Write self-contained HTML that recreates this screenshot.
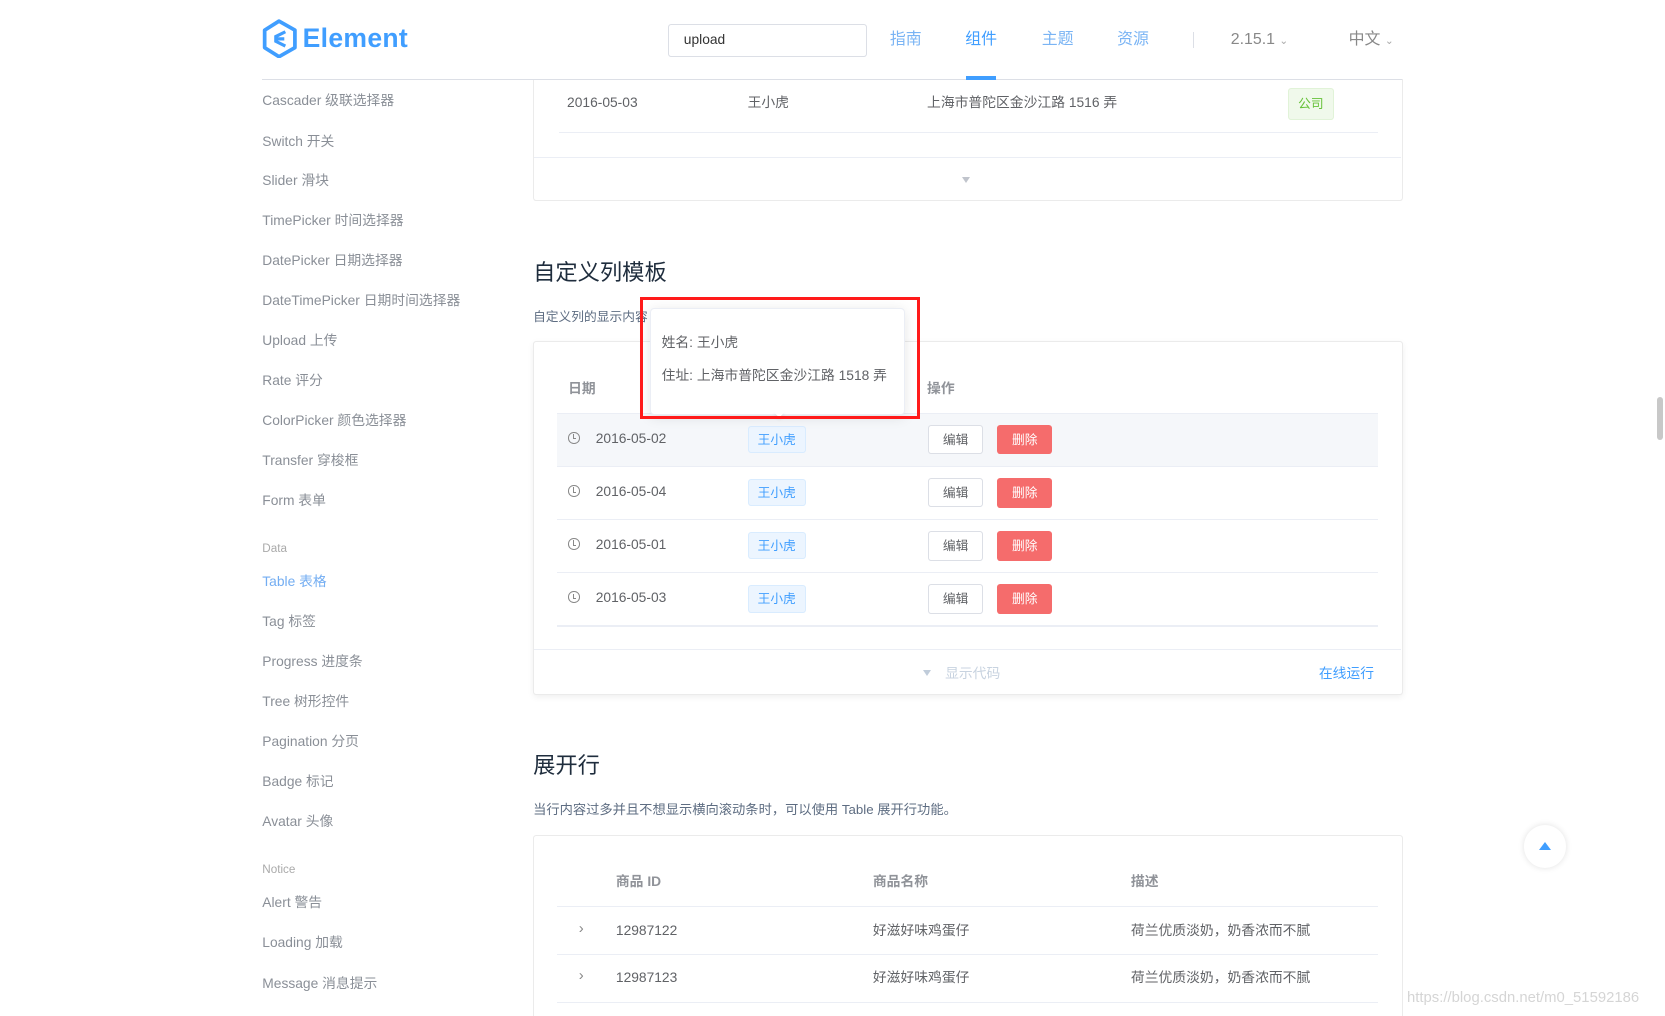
<!DOCTYPE html>
<html><head><meta charset="utf-8">
<style>
html,body{margin:0;padding:0;background:#fff;overflow:hidden}
body{width:1665px;height:1016px}
#w{zoom:1.0619;position:relative;width:1568px;height:957px;font-family:"Liberation Sans","Noto Sans CJK SC",sans-serif;color:#606266}
.a{position:absolute;white-space:nowrap;line-height:18px}
.side{font-size:13px;color:#8a8f97}
.grp{font-size:11px;color:#aaa}
.nav{font-size:15px;color:#7ab4f4}
.line{position:absolute;height:1px;background:#ebeef5}
.box{position:absolute;border:1px solid #ebebeb;border-radius:3px;background:#fff}
.t{font-size:13px;color:#606266}
.h{font-size:13px;color:#909399;font-weight:bold}
.tag{position:absolute;height:24px;line-height:24px;border:1px solid #d9ecff;background:#ecf5ff;color:#409eff;font-size:12px;border-radius:3px;text-align:center}
.btn1{position:absolute;width:50px;height:26px;line-height:26px;border:1px solid #dcdfe6;border-radius:3px;font-size:12px;text-align:center;color:#606266;background:#fff}
.btn2{position:absolute;width:52px;height:28px;line-height:28px;background:#f56c6c;border-radius:3px;font-size:12px;text-align:center;color:#fff}
.clk{position:absolute;width:9px;height:9px;border:1.3px solid #888;border-radius:50%}
.clk:after{content:"";position:absolute;left:4px;top:1px;width:2px;height:4px;border-left:1px solid #888;border-bottom:1px solid #888}
</style></head><body><div id="w">
<!-- logo -->
<svg class="a" style="left:247px;top:18px" width="34" height="37" viewBox="0 0 34 37"><path d="M16 2 L31 10.5 L31 27 L16 35.5 L2.5 27 L2.5 10.5 Z" fill="none" stroke="#409eff" stroke-width="3.5" stroke-linejoin="round"/><path d="M22 12 L13 16.5 L13 21 L22 25.5 M14 18.7 L21 18.7" fill="none" stroke="#409eff" stroke-width="3"/></svg>
<div class="a" style="left:285px;top:22px;font-size:25px;line-height:30px;font-weight:bold;color:#409eff;letter-spacing:.3px">Element</div>
<div class="a" style="left:629px;top:23px;width:186px;height:29px;border:1px solid #dcdfe6;border-radius:3px;font-size:13px;line-height:29px;color:#333;box-sizing:content-box"><span style="padding-left:14px">upload</span></div>
<div class="a nav" style="left:838px;top:28px">指南</div>
<div class="a nav" style="left:909px;top:28px;color:#409eff">组件</div>
<div class="a nav" style="left:981px;top:28px">主题</div>
<div class="a nav" style="left:1052px;top:28px">资源</div>
<div class="a" style="left:1123px;top:30px;width:1px;height:15px;background:#dcdfe6"></div>
<div class="a" style="left:1159px;top:28px;font-size:15px;color:#888">2.15.1 <span style="font-size:10px;color:#aaa">&#8964;</span></div>
<div class="a" style="left:1270px;top:28px;font-size:15px;color:#888">中文 <span style="font-size:10px;color:#aaa">&#8964;</span></div>
<!-- top demo box -->
<div class="box" style="left:502px;top:74px;width:817px;height:114px;border-top:none;border-radius:0 0 3px 3px"></div>
<div class="line" style="left:247px;top:74px;width:1073px;background:#dcdfe6"></div>
<div class="a" style="left:910px;top:72px;width:28px;height:3px;background:#409eff"></div>
<!-- sidebar -->
<div class="a side" style="left:247px;top:86px">Cascader 级联选择器</div>
<div class="a side" style="left:247px;top:124px">Switch 开关</div>
<div class="a side" style="left:247px;top:161px">Slider 滑块</div>
<div class="a side" style="left:247px;top:199px">TimePicker 时间选择器</div>
<div class="a side" style="left:247px;top:236px">DatePicker 日期选择器</div>
<div class="a side" style="left:247px;top:274px">DateTimePicker 日期时间选择器</div>
<div class="a side" style="left:247px;top:312px">Upload 上传</div>
<div class="a side" style="left:247px;top:349px">Rate 评分</div>
<div class="a side" style="left:247px;top:387px">ColorPicker 颜色选择器</div>
<div class="a side" style="left:247px;top:425px">Transfer 穿梭框</div>
<div class="a side" style="left:247px;top:462px">Form 表单</div>
<div class="a grp" style="left:247px;top:508px">Data</div>
<div class="a side" style="left:247px;top:539px;color:#73adf2">Table 表格</div>
<div class="a side" style="left:247px;top:576px">Tag 标签</div>
<div class="a side" style="left:247px;top:614px">Progress 进度条</div>
<div class="a side" style="left:247px;top:652px">Tree 树形控件</div>
<div class="a side" style="left:247px;top:689px">Pagination 分页</div>
<div class="a side" style="left:247px;top:727px">Badge 标记</div>
<div class="a side" style="left:247px;top:765px">Avatar 头像</div>
<div class="a grp" style="left:247px;top:810px">Notice</div>
<div class="a side" style="left:247px;top:841px">Alert 警告</div>
<div class="a side" style="left:247px;top:879px">Loading 加载</div>
<div class="a side" style="left:247px;top:917px">Message 消息提示</div>
<div class="a t" style="left:534px;top:88px">2016-05-03</div>
<div class="a t" style="left:704px;top:88px">王小虎</div>
<div class="a t" style="left:873px;top:88px">上海市普陀区金沙江路 1516 弄</div>
<div class="a" style="left:1213px;top:83px;width:41px;height:28px;line-height:28px;text-align:center;background:#f0f9eb;border:1px solid #e1f3d8;border-radius:3px;color:#67c23a;font-size:12px">公司</div>
<div class="line" style="left:526px;top:124px;width:772px"></div>
<div class="line" style="left:503px;top:148px;width:816px"></div>
<div class="a" style="left:906px;top:167px;width:0;height:0;border-left:4px solid transparent;border-right:4px solid transparent;border-top:6px solid #c0c4cc"></div>
<!-- heading 1 -->
<div class="a" style="left:502px;top:242px;font-size:21px;line-height:30px;color:#1f2d3d">自定义列模板</div>
<div class="a" style="left:502px;top:289px;font-size:12px;color:#5e6d82">自定义列的显示内容</div>
<div class="box" style="left:502px;top:321px;width:817px;height:332px;box-shadow:0 2px 6px rgba(0,0,0,.06)"></div>
<div class="a h" style="left:535px;top:357px">日期</div>
<div class="a h" style="left:873px;top:357px">操作</div>
<div class="line" style="left:525px;top:389px;width:773px"></div>
<div class="a" style="left:525px;top:390px;width:773px;height:49px;background:#f5f7fa"></div>
<div class="line" style="left:525px;top:439px;width:773px"></div>
<div class="line" style="left:525px;top:489px;width:773px"></div>
<div class="line" style="left:525px;top:539px;width:773px"></div>
<div class="line" style="left:525px;top:589px;width:773px"></div>
<div class="clk" style="left:535px;top:407px"></div><div class="a t" style="left:561px;top:404px">2016-05-02</div>
<div class="clk" style="left:535px;top:457px"></div><div class="a t" style="left:561px;top:454px">2016-05-04</div>
<div class="clk" style="left:535px;top:507px"></div><div class="a t" style="left:561px;top:504px">2016-05-01</div>
<div class="clk" style="left:535px;top:557px"></div><div class="a t" style="left:561px;top:554px">2016-05-03</div>
<div class="tag" style="left:704px;top:401px;width:53px">王小虎</div>
<div class="tag" style="left:704px;top:451px;width:53px">王小虎</div>
<div class="tag" style="left:704px;top:501px;width:53px">王小虎</div>
<div class="tag" style="left:704px;top:551px;width:53px">王小虎</div>
<div class="btn1" style="left:874px;top:400px">编辑</div><div class="btn2" style="left:939px;top:400px">删除</div>
<div class="btn1" style="left:874px;top:450px">编辑</div><div class="btn2" style="left:939px;top:450px">删除</div>
<div class="btn1" style="left:874px;top:500px">编辑</div><div class="btn2" style="left:939px;top:500px">删除</div>
<div class="btn1" style="left:874px;top:550px">编辑</div><div class="btn2" style="left:939px;top:550px">删除</div>
<div class="line" style="left:503px;top:611px;width:816px"></div>
<div class="a" style="left:869px;top:631px;width:0;height:0;border-left:4px solid transparent;border-right:4px solid transparent;border-top:6px solid #c0ccda"></div>
<div class="a" style="left:890px;top:625px;font-size:13px;color:#c8d3e0">显示代码</div>
<div class="a" style="left:1242px;top:625px;font-size:13px;color:#409eff">在线运行</div>
<!-- tooltip -->
<div class="a" style="left:612px;top:290px;width:238px;height:99px;background:#fff;border:1px solid #ebeef5;border-radius:4px;box-shadow:0 2px 12px rgba(0,0,0,.1)"></div>
<div class="a" style="left:730px;top:384px;width:8px;height:8px;background:#fff;transform:rotate(45deg);box-shadow:2px 2px 3px rgba(0,0,0,.06)"></div>
<div class="a" style="left:623px;top:314px;font-size:13px;color:#606266">姓名: 王小虎</div>
<div class="a" style="left:623px;top:345px;font-size:13px;color:#606266">住址: 上海市普陀区金沙江路 1518 弄</div>
<div class="a" style="left:603px;top:280px;width:258px;height:109px;border:3px solid #ff1a1a"></div>
<!-- heading 2 -->
<div class="a" style="left:502px;top:706px;font-size:21px;line-height:30px;color:#1f2d3d">展开行</div>
<div class="a" style="left:502px;top:753px;font-size:12.5px;color:#5e6d82">当行内容过多并且不想显示横向滚动条时，可以使用 Table 展开行功能。</div>
<div class="box" style="left:502px;top:786px;width:817px;height:200px"></div>
<div class="a h" style="left:580px;top:821px">商品 ID</div>
<div class="a h" style="left:822px;top:821px">商品名称</div>
<div class="a h" style="left:1065px;top:821px">描述</div>
<div class="line" style="left:525px;top:853px;width:773px"></div>
<div class="line" style="left:525px;top:898px;width:773px"></div>
<div class="line" style="left:525px;top:944px;width:773px"></div>
<div class="a" style="left:545px;top:866px;font-size:14px;color:#888">&#8250;</div>
<div class="a t" style="left:580px;top:867px">12987122</div>
<div class="a t" style="left:822px;top:867px">好滋好味鸡蛋仔</div>
<div class="a t" style="left:1065px;top:867px">荷兰优质淡奶，奶香浓而不腻</div>
<div class="a" style="left:545px;top:911px;font-size:14px;color:#888">&#8250;</div>
<div class="a t" style="left:580px;top:912px">12987123</div>
<div class="a t" style="left:822px;top:912px">好滋好味鸡蛋仔</div>
<div class="a t" style="left:1065px;top:912px">荷兰优质淡奶，奶香浓而不腻</div>
<!-- back to top -->
<div class="a" style="left:1435px;top:777px;width:40px;height:40px;border-radius:50%;background:#fff;box-shadow:0 0 6px rgba(0,0,0,.12)"></div>
<div class="a" style="left:1449px;top:793px;width:0;height:0;border-left:6px solid transparent;border-right:6px solid transparent;border-bottom:8px solid #409eff"></div>
<div class="a" style="left:1560px;top:374px;width:6px;height:40px;border-radius:3px;background:#c8c8c8"></div>
<div class="a" style="left:1325px;top:931px;font-size:14px;color:#d5d5d5">https://blog.csdn.net/m0_51592186</div>
</div></body></html>
